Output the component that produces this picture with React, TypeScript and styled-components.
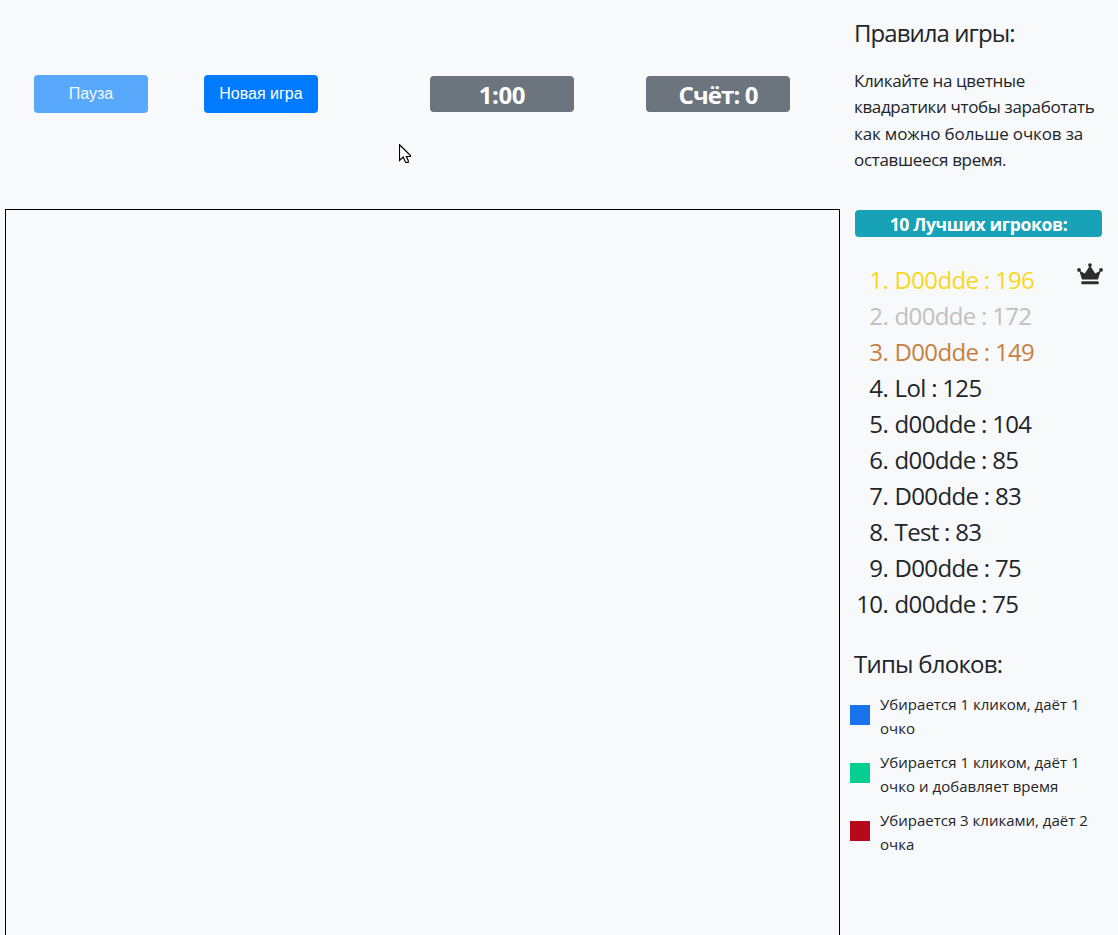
import React from "react";
import styled, { createGlobalStyle } from "styled-components";

const GlobalStyle = createGlobalStyle`
  * { box-sizing: border-box; }
  body {
    margin: 0;
    background: #f8f9fb;
    color: #212529;
    font-family: "Open Sans", "Noto Sans", sans-serif;
    overflow: hidden;
  }
`;

const Page = styled.div`
  position: relative;
  display: flex;
  height: 935px;
  overflow: hidden;
`;

const Game = styled.main`
  width: 840px;
  padding-left: 5px;
  display: flex;
  flex-direction: column;
`;

const Toolbar = styled.div`
  flex: none;
  display: flex;
  align-items: flex-start;
  height: 209px;
  padding: 75px 0 0 29px;
`;

const Button = styled.button`
  width: 114px;
  height: 38px;
  margin-right: 56px;
  padding: 0;
  border: 0;
  border-radius: 4px;
  background: #007bff;
  color: #fff;
  font: 16px/24px "Liberation Sans", Arial, sans-serif;
  white-space: nowrap;
  &:disabled { background: #58a8fb; color: #f3f9ff; }
`;

const Badge = styled.div<{ $spacing: number }>`
  width: 144px;
  height: 36px;
  margin-top: 1px;
  border-radius: 4px;
  background: #6c757d;
  color: #fff;
  font-size: 24px;
  font-weight: 700;
  line-height: 38px;
  text-align: center;
  white-space: nowrap;
  letter-spacing: ${(p) => p.$spacing}px;
  & + & { margin-left: 72px; }
`;

const Timer = styled.div`
  display: flex;
  margin-left: 56px;
`;

const Board = styled.section`
  flex: none;
  width: 835px;
  height: 800px;
  border: 1px solid #000;
`;

const Sidebar = styled.aside`
  width: 278px;
  padding: 18px 16px 0 14px;
`;

const Heading = styled.h4<{ $spacing: number }>`
  margin: 0;
  font-size: 24px;
  font-weight: 400;
  line-height: 29px;
  white-space: nowrap;
  letter-spacing: ${(p) => p.$spacing}px;
`;

const Rules = styled.p`
  margin: 21px 0 36px;
  font-size: 17px;
  line-height: 26.4px;
  white-space: nowrap;
`;

const Line = styled.span<{ $spacing: number }>`
  display: block;
  letter-spacing: ${(p) => p.$spacing}px;
`;

const Banner = styled.div`
  height: 27px;
  margin-left: 1px;
  border-radius: 4px;
  background: #17a2b8;
  color: #fff;
  font-size: 17.6px;
  font-weight: 700;
  line-height: 29px;
  letter-spacing: -0.4px;
  text-align: center;
  white-space: nowrap;
`;

const Leaders = styled.div`
  display: flex;
  justify-content: space-between;
  margin-top: 25px;
`;

const Ranking = styled.ol`
  margin: 0;
  padding: 0;
  list-style: none;
`;

const Player = styled.li<{ $color?: string }>`
  display: flex;
  font-size: 24px;
  line-height: 36px;
  letter-spacing: -0.68px;
  white-space: pre;
  color: ${(p) => p.$color ?? "inherit"};
`;

const Rank = styled.span`
  width: 34px;
  margin-right: 6.6px;
  text-align: right;
`;

const Crown = styled.svg`
  flex: none;
  width: 26px;
  height: 22px;
  margin: 1px -0.5px 0 0;
`;

const Types = styled.section`
  margin-top: 27px;
`;

const TypeRow = styled.div`
  display: flex;
  align-items: center;
  height: 48px;
  margin: 0 0 10px -4px;
  font-size: 15px;
  line-height: 24px;
  white-space: nowrap;
`;

const Swatch = styled.i<{ $color: string }>`
  width: 20px;
  height: 20px;
  margin: -2px 10px 0 0;
  background: ${(p) => p.$color};
`;

const TypeList = styled.div`
  margin-top: 14px;
`;

const Cursor = styled.svg`
  position: absolute;
  left: 399px;
  top: 144px;
`;

type TextLine = [text: string, spacing: number];

const rules: TextLine[] = [
  ["Кликайте на цветные", -0.37],
  ["квадратики чтобы заработать", -0.35],
  ["как можно больше очков за", -0.14],
  ["оставшееся время.", -0.33],
];

const players = [
  { name: "D00dde", score: 196, color: "#f8d71f" },
  { name: "d00dde", score: 172, color: "#c0c0c0" },
  { name: "D00dde", score: 149, color: "#c68142" },
  { name: "Lol", score: 125 },
  { name: "d00dde", score: 104 },
  { name: "d00dde", score: 85 },
  { name: "D00dde", score: 83 },
  { name: "Test", score: 83 },
  { name: "D00dde", score: 75 },
  { name: "d00dde", score: 75 },
];

const types: { color: string; lines: TextLine[] }[] = [
  { color: "#1873ec", lines: [["Убирается 1 кликом, даёт 1", 0.03], ["очко", 0.05]] },
  { color: "#05ce91", lines: [["Убирается 1 кликом, даёт 1", 0.03], ["очко и добавляет время", 0.04]] },
  { color: "#b60a1c", lines: [["Убирается 3 кликами, даёт 2", 0], ["очка", 0]] },
];

const Lines = ({ items }: { items: TextLine[] }) => (
  <>
    {items.map(([text, spacing]) => (
      <Line key={text} $spacing={spacing}>{text}</Line>
    ))}
  </>
);

export default function App() {
  return (
    <Page>
      <GlobalStyle />
      <Game>
        <Toolbar>
          <Button disabled>Пауза</Button>
          <Button>Новая игра</Button>
          <Timer>
            <Badge $spacing={-0.4}>1:00</Badge>
            <Badge $spacing={-0.9}>Счёт: 0</Badge>
          </Timer>
        </Toolbar>
        <Board />
      </Game>
      <Sidebar>
        <Heading $spacing={-0.95}>Правила игры:</Heading>
        <Rules><Lines items={rules} /></Rules>
        <Banner>10 Лучших игроков:</Banner>
        <Leaders>
          <Ranking>
            {players.map((p, i) => (
              <Player key={i} $color={p.color}>
                <Rank>{i + 1}.</Rank>
                <span>{p.name} : {p.score}</span>
              </Player>
            ))}
          </Ranking>
          <Crown viewBox="0 0 26 22" fill="#2d2d2f">
            <path d="M5 16.5 2.2 7.5 7.8 10.5 13 2.5 18.2 10.5 23.8 7.5 21 16.5Z" />
            <circle cx="13" cy="2.1" r="1.9" />
            <circle cx="2" cy="6.9" r="1.9" />
            <circle cx="24" cy="6.9" r="1.9" />
            <rect x="4.3" y="18.2" width="17.4" height="3" rx="1" />
          </Crown>
        </Leaders>
        <Types>
          <Heading $spacing={-0.75}>Типы блоков:</Heading>
          <TypeList>
            {types.map((t) => (
              <TypeRow key={t.color}>
                <Swatch $color={t.color} />
                <div><Lines items={t.lines} /></div>
              </TypeRow>
            ))}
          </TypeList>
        </Types>
      </Sidebar>
      <Cursor width="13" height="20" viewBox="0 0 13 20">
        <path d="M.5.7V16.5L4.2 13 6.7 18.5H9.2V16.5L7.3 12.5H11.5V11.5Z" fill="#fff" stroke="#000" strokeWidth="1.2" />
      </Cursor>
    </Page>
  );
}
